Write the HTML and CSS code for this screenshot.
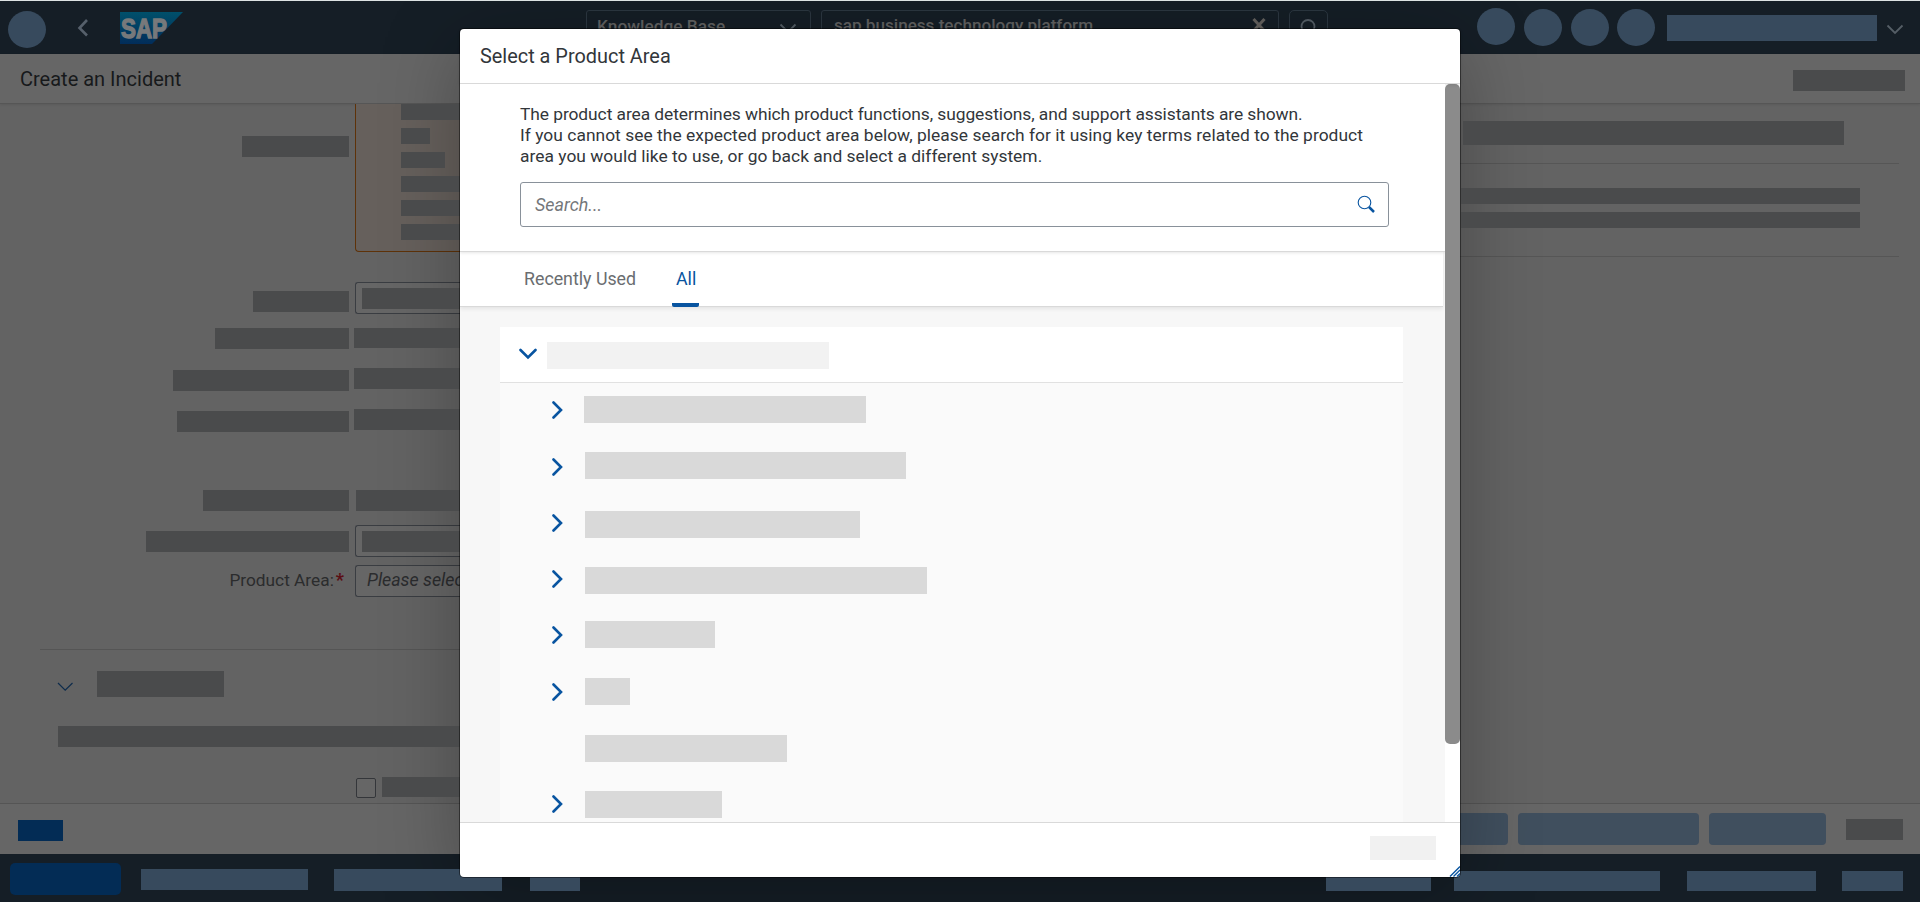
FILE: index.html
```html
<!DOCTYPE html>
<html lang="en">
<head>
<meta charset="utf-8">
<title>Create an Incident</title>
<link rel="stylesheet" href="styles.css">
</head>
<body>
<div class="page">
  <header class="shell">
    <span class="dot dot-menu"></span>
    <svg class="back" width="12" height="20" viewBox="0 0 12 20"><path d="M10 2 L2.500 10 L10 17.500"/></svg>
    <svg class="logo" width="64" height="33" viewBox="0 0 64 33">
      <defs><linearGradient id="brand" x1="0" y1="0" x2="0" y2="1"><stop offset="0" stop-color="#00506b"/><stop offset="1" stop-color="#022d5a"/></linearGradient></defs>
      <polygon points="0,0 63,0 32,32 0,32" fill="url(#brand)"/>
      <text x="1" y="25.500" textLength="46" lengthAdjust="spacingAndGlyphs">SAP</text>
    </svg>
    <div class="field field-scope"><span class="t-scope">Knowledge Base</span><svg class="chev" width="18" height="11" viewBox="0 0 18 11"><path d="M1.500 1.500 L9 9 L16.500 1.500"/></svg></div>
    <div class="field field-query"><span class="t-query">sap business technology platform</span><svg class="clear" width="14" height="14" viewBox="0 0 14 14"><path d="M1.500 1 L12.500 13 M12.500 1 L1.500 13"/></svg></div>
    <div class="field field-go"><svg class="lens" width="20" height="20" viewBox="0 0 20 20"><path d="M12.500 12 L18 18"/><circle cx="8" cy="7.500" r="6.500"/></svg></div>
    <div class="dots"><span class="dot dot-up"></span><span class="dot"></span><span class="dot"></span><span class="dot dot-last"></span></div>
    <span class="user"></span>
    <svg class="chev chev-user" width="18" height="11" viewBox="0 0 18 11"><path d="M1.500 1.500 L9 9 L16.500 1.500"/></svg>
  </header>

  <div class="titlebar"><h1 class="t-page">Create an Incident</h1><span class="block block-title"></span></div>

  <main class="content">
    <section class="form">
      <div class="row row-notice">
        <span class="block lab-a"></span>
        <div class="notice"><i class="block"></i><i class="block n2"></i><i class="block n3"></i><i class="block"></i><i class="block"></i><i class="block"></i></div>
      </div>
      <div class="row row-b"><span class="block lab-b"></span><div class="input"><i class="block"></i></div></div>
      <div class="row row-c"><span class="block lab-c"></span><span class="block val val-c"></span></div>
      <div class="row row-d"><span class="block lab-d"></span><span class="block val"></span></div>
      <div class="row row-e"><span class="block lab-e"></span><span class="block val"></span></div>
      <div class="row row-f"><span class="block lab-f"></span><span class="block val val-f"></span></div>
      <div class="row row-g"><span class="block lab-g"></span><div class="input"><i class="block"></i></div></div>
      <div class="row row-h"><label class="label"><span class="t-label">Product Area:</span><b class="req">*</b></label><div class="input"><em class="t-please">Please select</em></div></div>
      <div class="details">
        <div class="details-head"><svg class="chev chev-sec" width="17" height="10" viewBox="0 0 17 10"><path d="M1 1 L8.200 8.200 L15.500 1"/></svg><span class="block block-sec"></span></div>
        <span class="block block-line"></span>
        <div class="check"><span class="box"></span><span class="block block-check"></span></div>
      </div>
    </section>
    <aside class="side">
      <div class="side-top"><span class="block side-1"></span></div>
      <div class="side-mid"><span class="block side-2"></span><span class="block side-2"></span></div>
    </aside>
  </main>

  <div class="actions">
    <span class="act-blue"></span>
    <div class="act-right"><span class="btn btn-1"></span><span class="btn btn-2"></span><span class="btn btn-3"></span><span class="block block-act"></span></div>
  </div>
  <footer class="taskbar">
    <span class="start"></span><span class="task task-1"></span><span class="task task-2"></span><span class="task task-3"></span>
    <div class="task-right"><span class="task task-4"></span><span class="task task-5"></span><span class="task task-6"></span><span class="task task-7"></span></div>
  </footer>

  <div class="shade"></div>
  <div class="dialog">
    <div class="dlg-head"><h2 class="t-dialog">Select a Product Area</h2></div>
    <div class="dlg-main">
      <div class="dlg-view">
        <div class="intro">
          <p class="desc"><span class="l1">The product area determines which product functions, suggestions, and support assistants are shown.</span><br><span class="l2">If you cannot see the expected product area below, please search for it using key terms related to the product</span><br><span class="l3">area you would like to use, or go back and select a different system.</span></p>
          <div class="search"><em class="t-search">Search...</em><svg width="19" height="19" viewBox="0 0 19 19"><circle cx="7.500" cy="7.500" r="6.300" fill="none" stroke="#0854a0" stroke-width="1.100"/><path d="M12 12 L17 17" stroke="#0854a0" stroke-width="2.500" fill="none"/></svg></div>
        </div>
        <nav class="tabs"><span class="tab tab-recent">Recently Used</span><span class="tab tab-all">All</span></nav>
        <div class="tree">
          <div class="root"><svg class="arrow" width="18" height="12" viewBox="0 0 18 12"><path d="M1.500 2 L9 9.500 L16.500 2"/></svg><i class="bar bar-0"></i></div>
          <div class="node"><svg class="arrow" width="12" height="18" viewBox="0 0 12 18"><path d="M1.500 1.500 L9 9 L1.500 16.500"/></svg><i class="bar bar-1"></i></div>
          <div class="node"><svg class="arrow low" width="12" height="18" viewBox="0 0 12 18"><path d="M1.500 1.500 L9 9 L1.500 16.500"/></svg><i class="bar bar-2"></i></div>
          <div class="node"><svg class="arrow" width="12" height="18" viewBox="0 0 12 18"><path d="M1.500 1.500 L9 9 L1.500 16.500"/></svg><i class="bar bar-3"></i></div>
          <div class="node"><svg class="arrow" width="12" height="18" viewBox="0 0 12 18"><path d="M1.500 1.500 L9 9 L1.500 16.500"/></svg><i class="bar bar-4"></i></div>
          <div class="node"><svg class="arrow" width="12" height="18" viewBox="0 0 12 18"><path d="M1.500 1.500 L9 9 L1.500 16.500"/></svg><i class="bar bar-5"></i></div>
          <div class="node"><svg class="arrow low" width="12" height="18" viewBox="0 0 12 18"><path d="M1.500 1.500 L9 9 L1.500 16.500"/></svg><i class="bar bar-6"></i></div>
          <div class="node leaf"><i class="bar bar-7"></i></div>
          <div class="node"><svg class="arrow" width="12" height="18" viewBox="0 0 12 18"><path d="M1.500 1.500 L9 9 L1.500 16.500"/></svg><i class="bar bar-8"></i></div>
        </div>
      </div>
      <div class="scroll"><div class="thumb"></div></div>
    </div>
    <div class="dlg-foot"><span class="foot-block"></span><svg class="grip" width="11" height="11" viewBox="0 0 11 11"><path d="M1 10.500 L11 .5 M4.500 10.500 L11 4 M8 10.500 L11 7.500"/></svg></div>
  </div>
</div>
</body>
</html>
```
FILE: styles.css
```css
* { box-sizing: border-box; }
body { margin: 0; font-family: Roboto, "Liberation Sans", sans-serif; }
h1, h2, p { margin: 0; font-weight: 400; }
svg { display: block; flex: none; }
span, em { white-space: nowrap; }

.page { position: relative; display: flex; flex-direction: column; width: 1920px; height: 902px; overflow: hidden; background: #636363; border-top: 1px solid #dde3e3; }

.block { display: block; position: relative; z-index: 2; flex: none; background: #4a4b4c; }

/* shell bar */
.shell { display: flex; align-items: flex-start; height: 53px; flex: none; padding-left: 8px; background: #151e26; }
.dot { width: 38px; height: 37px; border-radius: 50%; background: #374a5d; flex: none; position: relative; z-index: 2; }
.dot-menu { margin-top: 10px; }
.back { margin: 17px 0 0 31px; }
.back path { fill: none; stroke: #56606b; stroke-width: 2.6; }
.logo { margin: 11px 0 0 31px; }
.logo text { font: 700 27px "Liberation Sans", sans-serif; fill: #77797b; stroke: #77797b; stroke-width: 1.4; }
.field { display: flex; align-items: flex-start; height: 34px; margin-top: 9px; border: 1px solid #2c3741; border-radius: 3px; flex: none; color: #626262; font-size: 17.3px; line-height: 20px; font-weight: 500; }
.field-scope { width: 225px; margin-left: 402px; padding: 5px 13px 0 10px; justify-content: space-between; }
.field-query { width: 458px; margin-left: 10px; padding: 4px 12px 0 12px; justify-content: space-between; }
.t-query { font-size: 17.1px; }
.field-go { width: 39px; margin-left: 10px; padding: 8px 0 0 10px; border-radius: 5px; }
.chev path, .lens path, .lens circle { fill: none; stroke: #555e66; stroke-width: 1.8; }
.field .chev { margin-top: 7px; }
.clear { margin-top: 3px; }
.clear path { fill: none; stroke: #65625f; stroke-width: 3; }
.dots { display: flex; gap: 9px; margin: 8px 0 0 149px; }
.dot-up { margin-top: -1px; }
.dot-last { margin-left: -1px; }
.user { width: 210px; height: 26px; margin: 14px 0 0 12px; background: #374a5d; }
.chev-user { margin: 23px 0 0 9px; }

/* page title */
.titlebar { display: flex; align-items: flex-start; justify-content: space-between; height: 50px; flex: none; padding: 16px 15px 0 20px; background: #666; border-bottom: 1px solid #565656; box-shadow: 0 1px 2px rgba(0,0,0,.08); }
.t-page { margin-top: -1px; font-size: 20px; line-height: 20px; color: #17191b; }
.block-title { width: 112px; height: 21px; }

/* form */
.content { display: flex; justify-content: space-between; height: 699px; flex: none; overflow: hidden; }
.form { width: 460px; }
.row { display: grid; grid-template-columns: 349px 1fr; justify-items: end; align-items: start; }
.row > :first-child { height: 21px; }
.row > :last-child { justify-self: stretch; }
.input { display: flex; height: 32px; margin-left: 6px; padding: 5px 0 0 6px; border: 1px solid #3a3d42; border-right: 0; border-radius: 3px 0 0 3px; background: #666; }
.input .block { width: 98px; height: 21px; }
.val { height: 21px; margin-left: 5px; }
.row-notice { height: 148px; }
.notice { display: flex; flex-direction: column; gap: 8px; height: 148px; margin-left: 6px; padding-left: 45px; border: solid #5e3209; border-width: 0 0 1px 1px; border-radius: 0 0 0 4px; background: #66605c; }
.notice .block { height: 16px; }
.notice .n2 { width: 29px; }
.notice .n3 { width: 44px; }
.lab-a { width: 107px; margin-top: 32px; }
.row-b { margin-top: 30px; } .lab-b { width: 96px; margin-top: 9px; }
.row-c { margin-top: 14px; } .lab-c { width: 134px; } .val-c { height: 20px; }
.row-d { margin-top: 19px; } .lab-d { width: 176px; margin-top: 2px; }
.row-e { margin-top: 18px; } .lab-e { width: 172px; margin-top: 2px; }
.row-f { margin-top: 58px; } .lab-f { width: 146px; } .val-f { margin-left: 7px; }
.row-g { margin-top: 14px; } .lab-g { width: 203px; margin-top: 6px; }
.row-h { margin-top: 8px; }
.label { display: flex; gap: 2px; margin: 5px 5px 0 0; font-size: 17.3px; line-height: 20px; color: #2b2c2d; }
.req { color: #5b0e14; font-size: 18px; }
.row-h .input { padding-top: 4px; }
.t-please { font-size: 17.8px; line-height: 20px; padding-left: 5px; color: #2b2c2e; }
.details { margin: 52px 0 0 40px; border-top: 1px solid #555; }
.details-head { display: flex; align-items: flex-start; padding: 21px 0 0 17px; }
.chev-sec { margin-top: 11px; }
.chev-sec path { stroke: #0e2c4c; stroke-width: 1.2; }
.block-sec { width: 127px; height: 26px; margin-left: 23px; }
.block-line { width: 402px; height: 21px; margin: 29px 0 0 18px; }
.check { display: flex; margin: 30px 0 0 316px; }
.box { width: 20px; height: 20px; margin-top: 1px; border: 1px solid #34363a; border-radius: 2px; background: #666; }
.block-check { width: 78px; height: 20px; margin-left: 6px; }

/* side column */
.side { width: 460px; padding-right: 21px; }
.side-top { height: 60px; padding: 17px 0 0 3px; border-bottom: 1px solid #565656; }
.side-1 { width: 381px; height: 24px; }
.side-mid { display: flex; flex-direction: column; gap: 8px; height: 93px; padding: 24px 0 0 1px; border-bottom: 1px solid #565656; }
.side-2 { width: 399px; height: 16px; }

/* action bar */
.actions { display: flex; align-items: flex-start; justify-content: space-between; height: 51px; flex: none; padding: 0 17px 0 18px; border-top: 1px solid #555; background: #666; }
.act-blue { width: 45px; height: 21px; margin-top: 16px; background: #032c55; }
.act-right { display: flex; gap: 10px; padding-top: 9px; }
.btn { height: 32px; border-radius: 4px; background: #404f5e; }
.btn-1 { width: 78px; } .btn-2 { width: 181px; } .btn-3 { width: 117px; }
.block-act { width: 57px; height: 21px; margin: 6px 0 0 10px; }

/* task bar */
.taskbar { display: flex; align-items: flex-start; height: 48px; flex: none; padding: 9px 17px 0 10px; background: #151e26; }
.start { width: 111px; height: 32px; border-radius: 5px; background: #032c55; }
.task { height: 22px; margin-top: 6px; background: #374a5d; position: relative; z-index: 2; }
.task-1 { width: 167px; height: 21px; margin-left: 20px; }
.task-2 { width: 168px; margin-left: 26px; }
.task-3 { width: 50px; margin-left: 28px; }
.task-right { display: flex; margin-left: auto; }
.task-right .task { height: 20px; margin-top: 8px; }
.task-4 { width: 105px; }
.task-5 { width: 206px; margin-left: 23px; }
.task-6 { width: 129px; margin-left: 27px; }
.task-7 { width: 61px; margin-left: 26px; }

/* dialog */
.shade, .dialog { position: absolute; left: 460px; top: 28px; width: 1000px; height: 848px; border-radius: 4px; }
.shade { z-index: 1; box-shadow: 0 16px 80px rgba(0,0,0,.28); }
.dialog { z-index: 3; display: flex; flex-direction: column; background: #fff; color: #32363a; box-shadow: 0 0 0 1px rgba(0,0,0,.45); }
.dlg-head { height: 55px; padding: 18px 20px 0; border-bottom: 1px solid #d9d9d9; box-shadow: 0 1px 3px rgba(0,0,0,.1); flex: none; position: relative; }
.t-dialog { font-size: 19.9px; line-height: 20px; }
.dlg-main { display: flex; height: 738px; flex: none; overflow: hidden; }
.dlg-view { width: 985px; background: #f7f7f7; overflow: hidden; }
.intro { height: 168px; padding: 20px 55px 0 60px; background: #fff; border-bottom: 1px solid #d9d9d9; box-shadow: 0 1px 3px rgba(0,0,0,.1); position: relative; }
.desc { font-size: 17.4px; line-height: 21px; height: 63px; }
.l1 { letter-spacing: -.075px; }
.l2 { letter-spacing: .035px; }
.l3 { letter-spacing: .02px; }
.search { display: flex; justify-content: space-between; height: 45px; margin-top: 15px; width: 869px; padding: 13px 12px 0 14px; border: 1px solid #89919a; border-radius: 3px; }
.search svg { margin-top: -1px; }
.t-search { font-size: 17.9px; line-height: 17px; color: #74777a; }
.tabs { display: flex; align-items: flex-start; width: 983px; height: 55px; padding-left: 64px; background: #fff; border-bottom: 1px solid #d9d9d9; box-shadow: 0 2px 4px rgba(0,0,0,.08); }
.tab { height: 55px; padding-top: 17px; font-size: 17.8px; line-height: 20px; color: #6a6d70; }
.tab-recent { width: 112px; }
.tab-all { width: 27px; margin-left: 36px; padding-left: 4px; color: #0854a0; background: linear-gradient(#0854a0, #0854a0) left bottom / 100% 4px no-repeat; border-radius: 2px; }
.tree { width: 903px; height: 520px; margin: 20px 0 0 40px; background: #fafafa; }
.root { display: flex; height: 56px; padding: 15px 0 0 19px; background: #fff; border-bottom: 1px solid #e1e1e1; }
.arrow { margin-top: 6px; }
.low { margin-top: 7px; }
.arrow path { fill: none; stroke: #0854a0; stroke-width: 2.6; stroke-linecap: round; }
.bar { display: block; height: 27px; background: #d9d9d9; }
.bar-0 { width: 282px; margin-left: 10px; background: #f2f2f2; }
.node { display: flex; align-items: flex-start; height: 56.3px; padding: 12px 0 0 52px; }
.leaf { padding-left: 85px; }
.node .bar { margin-left: 21px; }
.leaf .bar { margin-left: 0; }
.node .bar-1 { width: 282px; margin-left: 20px; margin-top: 1px; }
.bar-2 { width: 321px; margin-top: 1px; }
.bar-3 { width: 275px; margin-top: 3px; }
.bar-4 { width: 342px; margin-top: 3px; }
.bar-5 { width: 130px; margin-top: 1px; }
.bar-6 { width: 45px; margin-top: 2px; }
.bar-7 { width: 202px; margin-top: 2px; }
.bar-8 { width: 137px; margin-top: 2px; }
.node .leaf, .leaf .bar-7 { margin-left: 0; }
.scroll { width: 15px; background: #fff; }
.thumb { height: 660px; border-radius: 5px; background: #8b8b8b; }
.dlg-foot { position: relative; display: flex; justify-content: flex-end; height: 55px; padding: 13px 24px 0; border-top: 1px solid #d9d9d9; }
.foot-block { width: 66px; height: 24px; background: #f1f1f1; }
.grip { position: absolute; right: 0; bottom: 0; }
.grip path { fill: none; stroke: #0854a0; stroke-width: 1.4; }
```
